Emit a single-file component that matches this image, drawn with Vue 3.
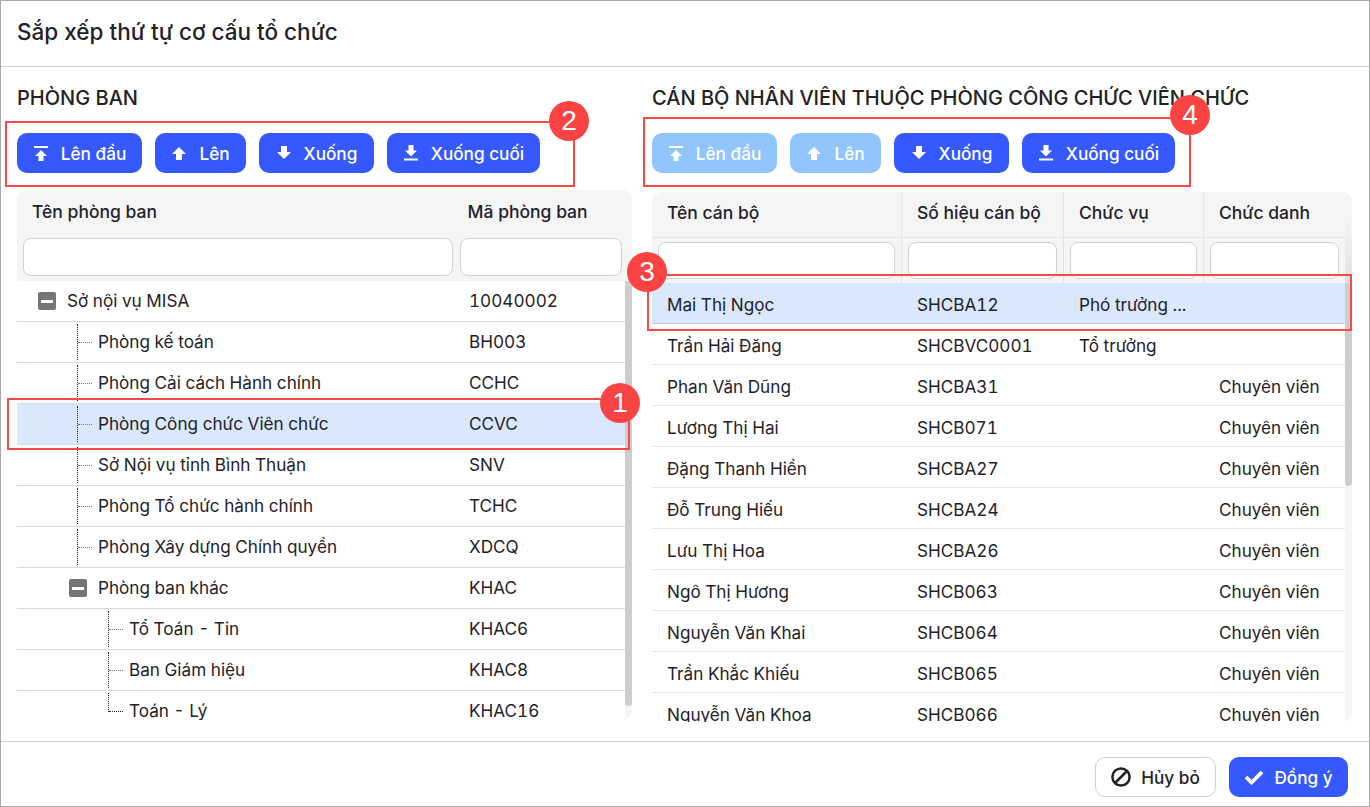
<script setup>
const leftRows = [
  { name: 'Sở nội vụ MISA', code: '10040002', level: 0, exp: true },
  { name: 'Phòng kế toán', code: 'BH003', level: 1 },
  { name: 'Phòng Cải cách Hành chính', code: 'CCHC', level: 1 },
  { name: 'Phòng Công chức Viên chức', code: 'CCVC', level: 1, sel: true },
  { name: 'Sở Nội vụ tỉnh Bình Thuận', code: 'SNV', level: 1 },
  { name: 'Phòng Tổ chức hành chính', code: 'TCHC', level: 1 },
  { name: 'Phòng Xây dựng Chính quyền', code: 'XDCQ', level: 1 },
  { name: 'Phòng ban khác', code: 'KHAC', level: 1, exp: true },
  { name: 'Tổ Toán - Tin', code: 'KHAC6', level: 2 },
  { name: 'Ban Giám hiệu', code: 'KHAC8', level: 2 },
  { name: 'Toán - Lý', code: 'KHAC16', level: 2, last: true },
]
const rightRows = [
  ['Mai Thị Ngọc', 'SHCBA12', 'Phó trưởng ...', ''],
  ['Trần Hải Đăng', 'SHCBVC0001', 'Tổ trưởng', ''],
  ['Phan Văn Dũng', 'SHCBA31', '', 'Chuyên viên'],
  ['Lương Thị Hai', 'SHCB071', '', 'Chuyên viên'],
  ['Đặng Thanh Hiền', 'SHCBA27', '', 'Chuyên viên'],
  ['Đỗ Trung Hiếu', 'SHCBA24', '', 'Chuyên viên'],
  ['Lưu Thị Hoa', 'SHCBA26', '', 'Chuyên viên'],
  ['Ngô Thị Hương', 'SHCB063', '', 'Chuyên viên'],
  ['Nguyễn Văn Khai', 'SHCB064', '', 'Chuyên viên'],
  ['Trần Khắc Khiếu', 'SHCB065', '', 'Chuyên viên'],
  ['Nguyễn Văn Khoa', 'SHCB066', '', 'Chuyên viên'],
]
const leftBtns = [
  { t: 'Lên đầu', i: 'top', w: 125 },
  { t: 'Lên', i: 'up', w: 91 },
  { t: 'Xuống', i: 'down', w: 115 },
  { t: 'Xuống cuối', i: 'bottom', w: 153 },
]
const rightBtns = [
  { t: 'Lên đầu', i: 'top', w: 125, off: true },
  { t: 'Lên', i: 'up', w: 91, off: true },
  { t: 'Xuống', i: 'down', w: 115 },
  { t: 'Xuống cuối', i: 'bottom', w: 153 },
]
const icons = {
  top: 'M1 1h14v2H1z M8 5l6 6h-3.5v5h-5v-5H2z',
  up: 'M8 2l7 7h-4v6H5V9H1z',
  down: 'M5 1h6v6h4l-7 7-7-7h4z',
  bottom: 'M5.5 0h5v5.5H14l-6 6-6-6h3.5z M1 13.5h14v2H1z',
}
</script>

<template>
  <div class="dialog">
    <header class="head">Sắp xếp thứ tự cơ cấu tổ chức</header>

    <main class="body">
      <section class="left">
        <h2 class="title">PHÒNG BAN</h2>
        <div class="tools">
          <button v-for="b in leftBtns" :key="b.t" class="btn" :style="{ width: b.w + 'px' }">
            <svg width="16" height="16" viewBox="0 0 16 16"><path :d="icons[b.i]" fill="#fff" /></svg>
            <span>{{ b.t }}</span>
          </button>
        </div>
        <div class="table ltable">
          <div class="lhead">
            <div class="lhcols"><span class="hc">Tên phòng ban</span><span class="hc code">Mã phòng ban</span></div>
            <div class="lfilters"><input class="inp f1" /><input class="inp f2" /></div>
          </div>
          <div class="lbody">
            <div class="lrows">
              <div v-for="r in leftRows" :key="r.code" class="lrow" :class="{ sel: r.sel }">
                <div class="namecell" :class="'lv' + r.level">
                  <span v-if="r.exp" class="exp"><i></i></span>
                  <span v-else class="conn" :class="{ last: r.last }"><i></i></span>
                  <span class="nm">{{ r.name }}</span>
                </div>
                <div class="codecell">{{ r.code }}</div>
              </div>
            </div>
            <div class="sbar lsbar"><div class="thumb"></div></div>
          </div>
        </div>
      </section>

      <section class="right">
        <h2 class="title">CÁN BỘ NHÂN VIÊN THUỘC PHÒNG CÔNG CHỨC VIÊN CHỨC</h2>
        <div class="tools">
          <button v-for="b in rightBtns" :key="b.t" class="btn" :class="{ off: b.off }" :style="{ width: b.w + 'px' }">
            <svg width="16" height="16" viewBox="0 0 16 16"><path :d="icons[b.i]" fill="#fff" /></svg>
            <span>{{ b.t }}</span>
          </button>
        </div>
        <div class="table rtable">
          <div class="rhead">
            <div class="rgrid rtitles">
              <span class="rh">Tên cán bộ</span><span class="rh">Số hiệu cán bộ</span><span class="rh">Chức vụ</span><span class="rh">Chức danh</span>
            </div>
            <div class="rgrid rfilters">
              <span class="rf"><input class="inp" /></span><span class="rf"><input class="inp" /></span><span class="rf"><input class="inp" /></span><span class="rf"><input class="inp" /></span>
            </div>
          </div>
          <div class="rbody">
            <div class="rrows">
              <div v-for="(r, i) in rightRows" :key="r[0]" class="rgrid rrow" :class="{ sel: i === 0 }">
                <span v-for="(c, j) in r" :key="j" class="rc">{{ c }}</span>
              </div>
            </div>
            <div class="sbar rsbar"><div class="thumb"></div></div>
          </div>
        </div>
      </section>

      <div class="mark m1"></div>
      <div class="mark m2"></div>
      <div class="mark m3"></div>
      <div class="mark m4"></div>
      <div class="badge b1">1</div>
      <div class="badge b2">2</div>
      <div class="badge b3">3</div>
      <div class="badge b4">4</div>
    </main>

    <footer class="foot">
      <button class="cancel">
        <svg width="20" height="20" viewBox="0 0 20 20" fill="none" stroke="#222" stroke-width="2.5"><circle cx="10" cy="10" r="8.6" /><path d="M4 16L16 4" /></svg>
        <span>Hủy bỏ</span>
      </button>
      <button class="ok">
        <svg width="20" height="16" viewBox="0 0 20 16" fill="none" stroke="#fff" stroke-width="3.8"><path d="M2 8l5.5 5.5L18 3" /></svg>
        <span>Đồng ý</span>
      </button>
    </footer>
  </div>
</template>

<style scoped>
.dialog {
  width: 1370px; height: 807px; box-sizing: border-box;
  border: 1px solid #a9a9a9; background: #fff;
  display: flex; flex-direction: column;
  font-family: Inter, "Noto Sans", sans-serif; color: #1f2229; overflow: hidden;
  font-variant-numeric: tabular-nums;
}
.head {
  height: 66px; flex: none; box-sizing: border-box; border-bottom: 1px solid #d0d0d0;
  padding: 0 16px 4px; display: flex; align-items: center;
  font-size: 22.5px; font-weight: 500;
}
.body { height: 674px; flex: none; position: relative; display: flex; padding-left: 16px; overflow: hidden; }
.left { width: 615px; flex: none; }
.right { width: 700px; flex: none; margin-left: 20px; }
.title { margin: 0; height: 66px; box-sizing: border-box; padding-top: 18px; font-size: 20px; line-height: 26px; font-weight: 500; color: #222; white-space: nowrap; }
.tools { display: flex; gap: 13px; height: 40px; }
.btn {
  height: 40px; border: 0; border-radius: 10px; background: #3559ff; color: #fff;
  display: flex; align-items: center; justify-content: center; gap: 12px;
  font: 500 17.2px Inter, sans-serif; padding: 0;
}
.btn.off { background: #93c5fd; }
.table { border-radius: 10px; overflow: hidden; }
.ltable { margin-top: 17px; height: 530px; }
.lhead { background: #f5f5f5; height: 91px; padding-right: 10px; }
.lhcols { display: flex; height: 48px; align-items: center; padding-bottom: 5px; box-sizing: border-box; }
.hc { font-size: 17.5px; font-weight: 500; padding-left: 15px; width: 437px; box-sizing: border-box; white-space: nowrap; }
.hc.code { padding-left: 15px; width: 170px; }
.lfilters { display: flex; gap: 7px; padding-left: 6px; }
.inp { display: block; height: 38px; box-sizing: border-box; width: 100%; border: 1px solid #d2d2d2; border-radius: 8px; background: #fff; padding: 0; }
.f1 { width: 430px; flex: none; }
.f2 { width: 162px; flex: none; }
.lbody, .rbody { display: flex; position: relative; }
.lrows, .rrows { flex: 1; min-width: 0; }
.lbody { height: 439px; }
.lrow { display: flex; height: 41px; box-sizing: border-box; border-bottom: 1px solid #d3dbea; font-size: 17.15px; }
.lrow.sel { background: #dae8fd; }
.lrow:last-child { border-bottom: 0; }
.namecell { width: 437px; box-sizing: border-box; flex: none; display: flex; align-items: center; height: 40px; }
.nm { margin-top: -2px; }
.codecell { padding-left: 15px; line-height: 39px; }
.lv0 { padding-left: 21px; }
.lv1 { padding-left: 52px; }
.lv2 { padding-left: 91px; }
.lv1 .conn { margin-left: 8px; }
.exp { width: 18px; height: 18px; border-radius: 2px; background: #757575; display: flex; align-items: center; justify-content: center; margin-right: 11px; flex: none; }
.exp i { display: block; width: 12px; height: 3px; background: #fff; }
.conn { width: 14px; height: 36px; margin-right: 6px; flex: none; border-left: 1px dotted #222; align-self: flex-start; margin-top: 2px; }
.conn i { display: block; height: 18px; border-bottom: 1px dotted #777; }
.conn.last { height: 19px; }
.conn.last i { border-bottom-color: #222; }
.sbar { width: 7px; flex: none; background: #f5f5f5; }
.thumb { background: #cdcdcd; border-radius: 0 0 4px 4px; }
.lsbar .thumb { height: 425px; }
.rsbar .thumb { height: 203px; }

.rtable { margin-top: 19px; height: 530px; }
.rhead {
  height: 91px;
  background: linear-gradient(#f5f5f5 25%, #e2e2e2) right top / 7px 100% no-repeat, #f5f5f5;
}
.rgrid { display: grid; grid-template-columns: 250px 162px 140px 141px; }
.rtitles { height: 45px; border-bottom: 1px solid #e4e4e4; margin-right: 7px; }
.rh { font-size: 17.5px; font-weight: 500; padding-left: 15px; line-height: 42px; border-right: 1px solid #e4e4e4; white-space: nowrap; }
.rh:last-child { border-right: 0; }
.rfilters { height: 46px; margin-right: 7px; }
.rf { padding: 4px 6px 0; border-right: 1px solid #e4e4e4; }
.rf:last-child { border-right: 0; }
.rf .inp { height: 37px; }
.rbody { height: 439px; }
.rrow { height: 41px; box-sizing: border-box; border-bottom: 1px solid #e6e6e6; font-size: 17.15px; align-items: center; }
.rrow.sel { background: #dae8fd; border-bottom-color: #c5ccd6; }
.rc { padding-left: 15px; white-space: nowrap; padding-top: 3px; }

.mark { position: absolute; border: 2px solid #f84848; box-sizing: border-box; }
.m1 { left: 6px; top: 331px; width: 623px; height: 52px; }
.m2 { left: 4px; top: 54px; width: 570px; height: 66px; }
.m3 { left: 646px; top: 207px; width: 705px; height: 57px; }
.m4 { left: 642px; top: 50px; width: 548px; height: 70px; }
.badge {
  position: absolute; width: 40px; height: 40px; border-radius: 50%; background: #fa4343; color: #fff;
  font: 400 28px/40px "Liberation Sans", sans-serif; text-align: center;
}
.b1 { left: 599px; top: 316px; }
.b2 { left: 548px; top: 34px; }
.b3 { left: 626px; top: 185px; }
.b4 { left: 1169px; top: 28px; }

.foot { flex: 1; border-top: 1px solid #d0d0d0; display: flex; justify-content: flex-end; align-items: flex-start; gap: 13px; padding: 15px 21px 0 0; }
.cancel, .ok { height: 40px; border-radius: 10px; display: flex; align-items: center; justify-content: center; gap: 10px; font: 500 17.2px Inter, sans-serif; padding: 0; }
.cancel { width: 121px; background: #fff; border: 1px solid #d0d0d0; color: #222; }
.ok { width: 119px; background: #3559ff; border: 0; color: #fff; }
</style>

<style>
html, body { margin: 0; background: #fff; }
</style>
